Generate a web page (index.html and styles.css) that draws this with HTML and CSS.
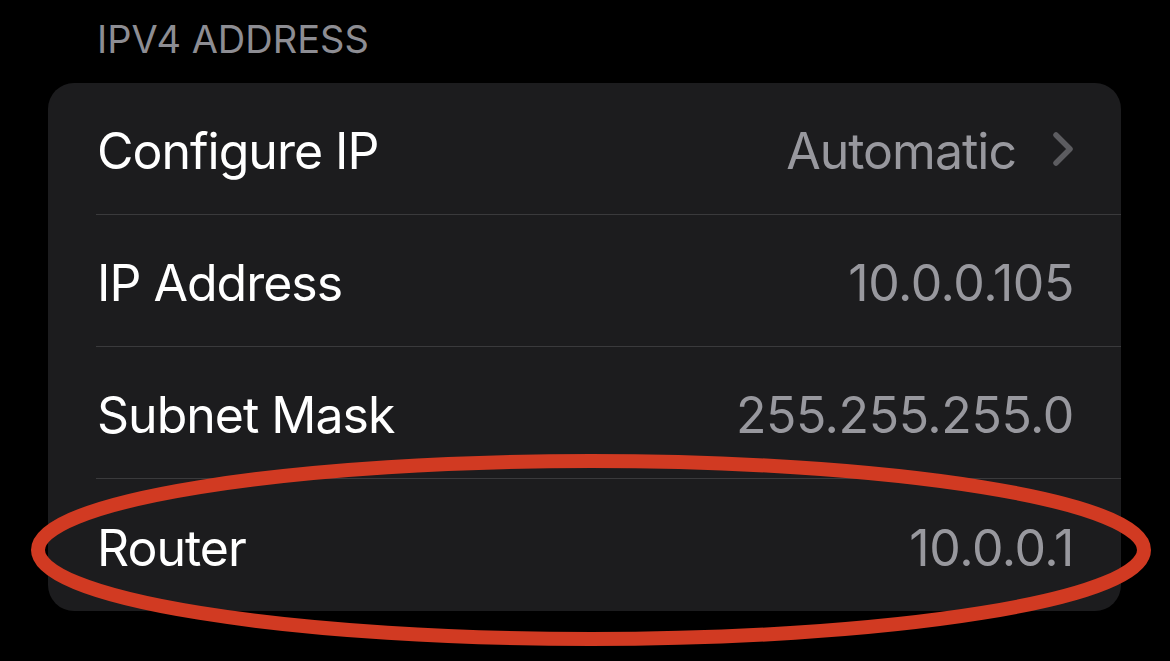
FILE: index.html
```html
<!DOCTYPE html>
<html>
<head>
	<meta charset="utf-8"/>
	<title>IPv4 Address</title>
	<link rel="stylesheet" href="styles.css">
</head>
<body>
	<div id="settings">
		<p class="section-title">IPV4 ADDRESS</p>
		<ul class="card">
			<li class="row">
				<span class="label">Configure IP</span>
				<span class="value">Automatic
					<svg class="chevron" width="20" height="34" viewBox="0 0 20 34"><polyline points="3,3 17,17 3,31" fill="none" stroke="#5c5c60" stroke-width="5.5" stroke-linecap="round" stroke-linejoin="round"/></svg>
				</span>
			</li>
			<li class="row">
				<span class="label">IP Address</span>
				<span class="value num">10.0.0.105</span>
			</li>
			<li class="row">
				<span class="label">Subnet Mask</span>
				<span class="value num">255.255.255.0</span>
			</li>
			<li class="row">
				<span class="label">Router</span>
				<span class="value num">10.0.0.1</span>
			</li>
		</ul>
		<!-- red marker round the router row -->
		<svg class="marker" width="1170" height="661" viewBox="0 0 1170 661"><ellipse cx="591" cy="550" rx="553" ry="89" fill="none" stroke="#d13a22" stroke-width="14"/></svg>
	</div>
</body>
</html>
```

FILE: styles.css
```css
*{
	margin:0;
	padding:0;
}
html,body{
	background:#000;
}
body{
	font-family: Inter, "Noto Sans", sans-serif;
	overflow: hidden;
}
#settings{
	position: relative;
	width:1170px;
	height:661px;
}
.section-title{
	padding:16px 0 0 97px;
	height:46px;
	line-height:46px;
	font-size:38px;
	color:#8d8d93;
}
.card{
	list-style: none;
	margin:21px 49px 0 48px;
	background-color:#1c1c1e;
	border-radius:26px;
	overflow: hidden;
}
.row{
	display:flex;
	align-items:center;
	justify-content: space-between;
	height:132px;
	margin-left:48px;
	padding:5px 48px 0 1px;
	box-sizing: border-box;
	border-bottom:1px solid #3a3a3c;
	font-size:50px;
	letter-spacing:-1px;
}
.row:last-child{
	border-bottom:none;
}
.label{
	color:#fff;
}
.value{
	display:flex;
	align-items:center;
	color:#98989e;
}
.value.num{
	letter-spacing:-0.4px;
	margin-right:-1px;
}
.chevron{
	margin-left:37px;
	margin-top:-4px;
}
.marker{
	position: absolute;
	top:0;
	left:0;
	pointer-events: none;
}
```
